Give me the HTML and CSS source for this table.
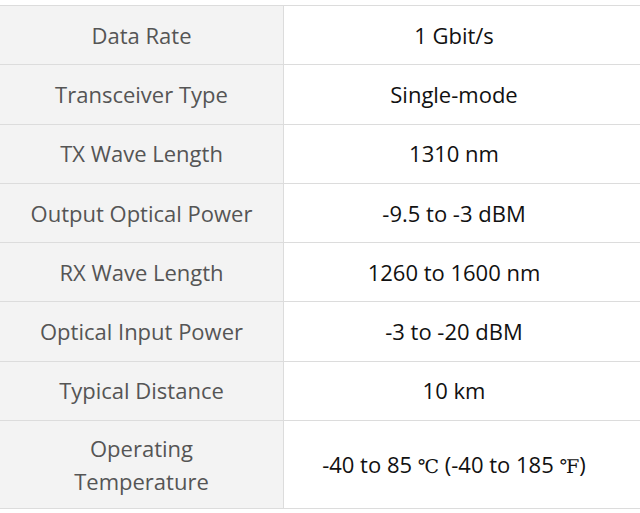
FILE: index.html
```html
<!DOCTYPE html>
<html>
<head>
<meta charset="utf-8">
<link rel="stylesheet" href="styles.css">
</head>
<body>
<table class="spec">
<tbody>
<tr><th>Data Rate</th><td>1 Gbit/s</td></tr>
<tr><th>Transceiver Type</th><td>Single-mode</td></tr>
<tr><th>TX Wave Length</th><td>1310 nm</td></tr>
<tr><th>Output Optical Power</th><td>-9.5 to -3 dBM</td></tr>
<tr><th>RX Wave Length</th><td>1260 to 1600 nm</td></tr>
<tr><th>Optical Input Power</th><td>-3 to -20 dBM</td></tr>
<tr><th>Typical Distance</th><td>10 km</td></tr>
<tr class="tall"><th>Operating<br>Temperature</th><td>-40 to 85 <span class="deg">℃</span> (-40 to 185 <span class="deg">℉</span>)</td></tr>
</tbody>
</table>
</body>
</html>
```
FILE: styles.css
```css
html, body {
  margin: 0;
  padding: 0;
  background: #ffffff;
}
body {
  padding-top: 5px;
  font-family: "Open Sans", "Noto Sans", sans-serif;
}
.spec {
  width: 640px;
  border-collapse: collapse;
  table-layout: fixed;
}
.spec th, .spec td {
  height: 58.3px;
  padding: 0;
  border-top: 1px solid #dcdcdc;
  border-bottom: 1px solid #dcdcdc;
  text-align: center;
  vertical-align: middle;
  font-size: 22px;
  line-height: 33px;
}
.spec th {
  width: 283px;
  background: #f3f3f3;
  color: #555555;
  font-weight: normal;
  border-right: 1px solid #dcdcdc;
}
.spec td {
  background: #ffffff;
  color: #111111;
  padding-right: 16px;
}
.spec .tall th, .spec .tall td {
  height: 86px;
  padding-top: 1px;
}
.deg {
  font-family: "DejaVu Serif", serif;
  font-size: 19px;
}
```
